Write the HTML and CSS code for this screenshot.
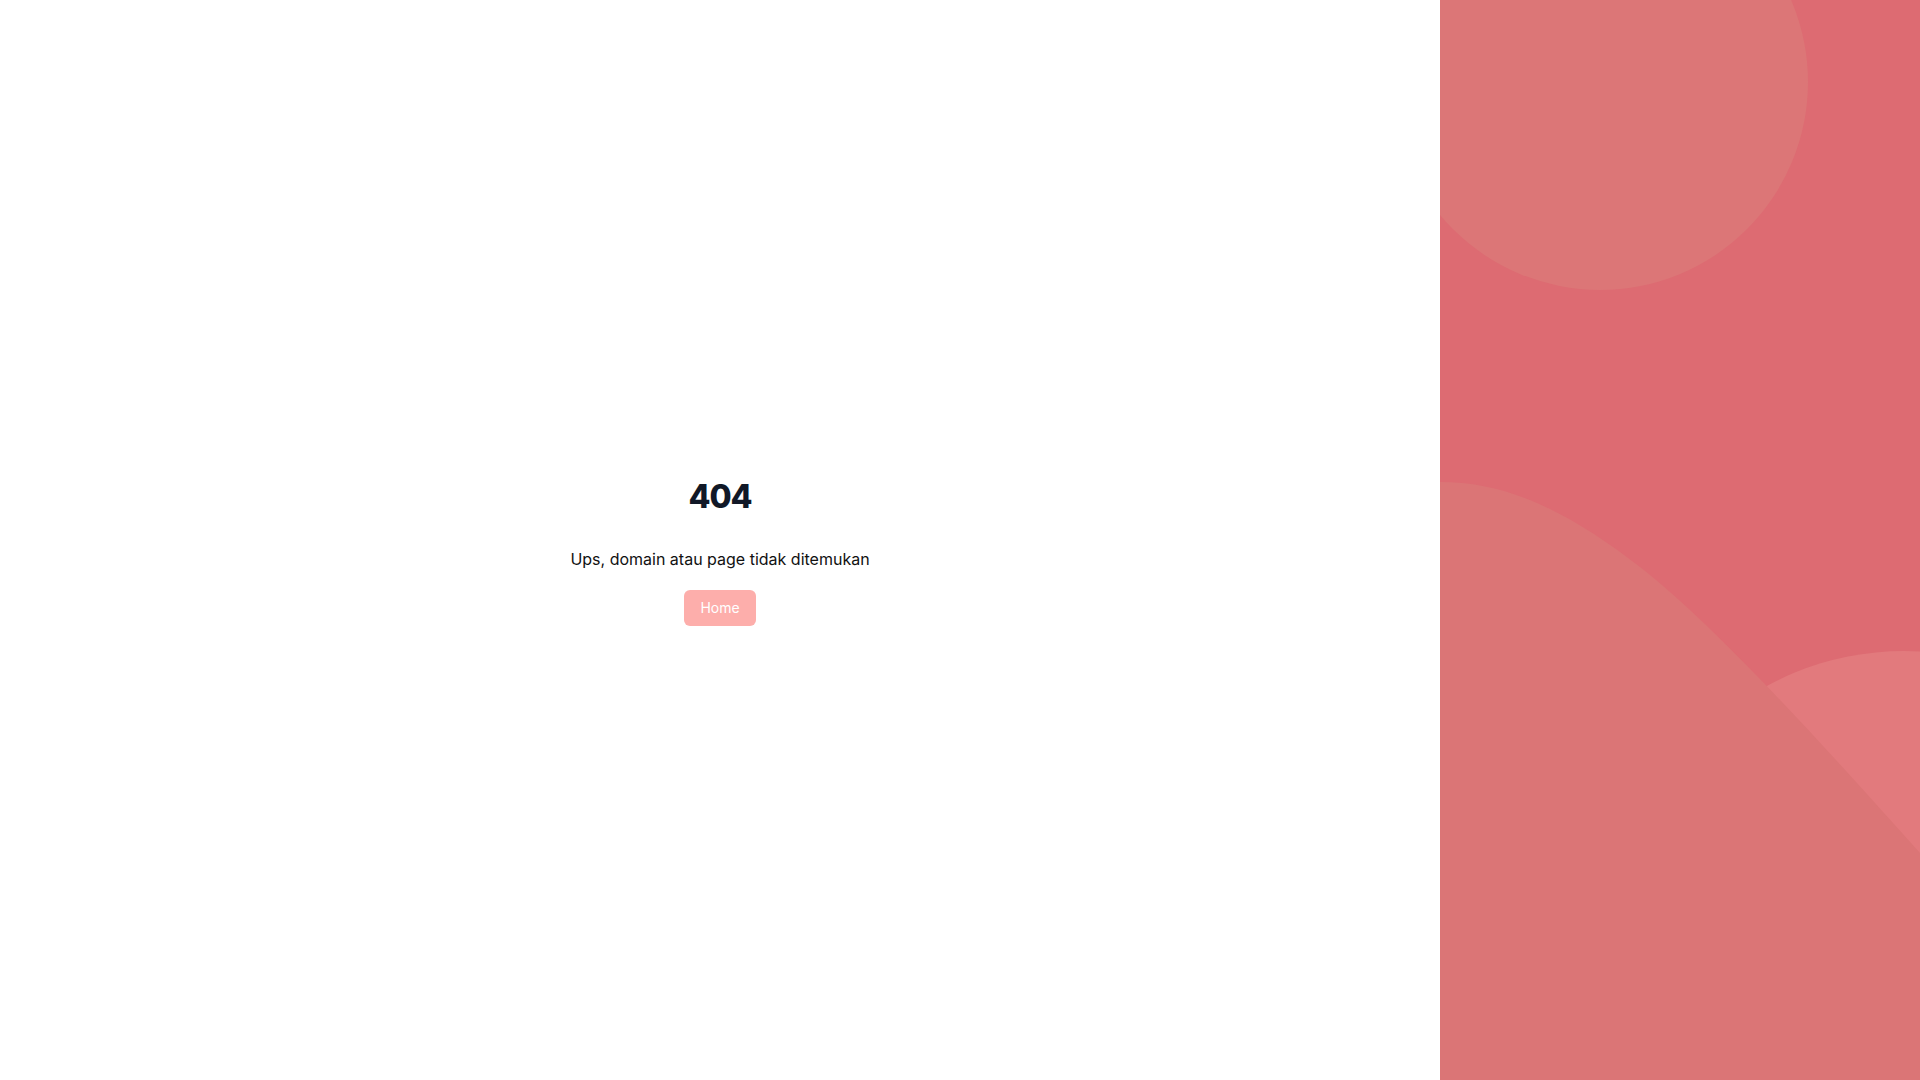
FILE: index.html
```html
<!DOCTYPE html>
<html lang="id">
<head>
<meta charset="utf-8">
<title>404</title>
<link rel="stylesheet" href="styles.css">
</head>
<body>
<div class="page">
  <main class="content">
    <div class="message">
      <h1 class="code">404</h1>
      <p class="text">Ups, domain atau page tidak ditemukan</p>
      <a class="btn" href="#">Home</a>
    </div>
  </main>
  <aside class="art">
    <svg class="art-svg" viewBox="0 0 480 1080" preserveAspectRatio="none" aria-hidden="true">
      <rect x="0" y="0" width="480" height="1080" fill="#dd6b72"/>
      <circle cx="160" cy="82" r="208" fill="#dc7677"/>
      <circle cx="464" cy="938" r="287" fill="#e27a7d"/>
      <path d="M0,482 C70,482 130,513 200,567 C280,629 400,764 480,853 L480,1080 L0,1080 Z" fill="#db7576"/>
    </svg>
  </aside>
</div>
</body>
</html>
```
FILE: styles.css
```css
html, body {
  margin: 0;
  padding: 0;
  height: 100%;
}
body {
  font-family: Inter, "Noto Sans", "Liberation Sans", sans-serif;
  background: #ffffff;
  color: #111827;
}
.page {
  display: flex;
  width: 100%;
  height: 100vh;
}
.content {
  flex: 1 1 auto;
  display: flex;
  align-items: center;
  justify-content: center;
  padding-top: 23px;
  box-sizing: border-box;
}
.message {
  display: flex;
  flex-direction: column;
  align-items: center;
}
.code {
  margin: 0;
  font-size: 32px;
  line-height: 40px;
  font-weight: 800;
  color: #111827;
  letter-spacing: -1px;
}
.text {
  margin: 30px 0 0;
  font-size: 16px;
  line-height: 24px;
  color: #111111;
}
.btn {
  margin-top: 19px;
  display: inline-block;
  padding: 8px 16px;
  font-size: 14px;
  line-height: 20px;
  color: #ffffff;
  background: #fdaeab;
  border-radius: 6px;
  text-decoration: none;
}
.art {
  flex: 0 0 480px;
  width: 480px;
  height: 100%;
  overflow: hidden;
}
.art-svg {
  display: block;
  width: 100%;
  height: 100%;
}
```
